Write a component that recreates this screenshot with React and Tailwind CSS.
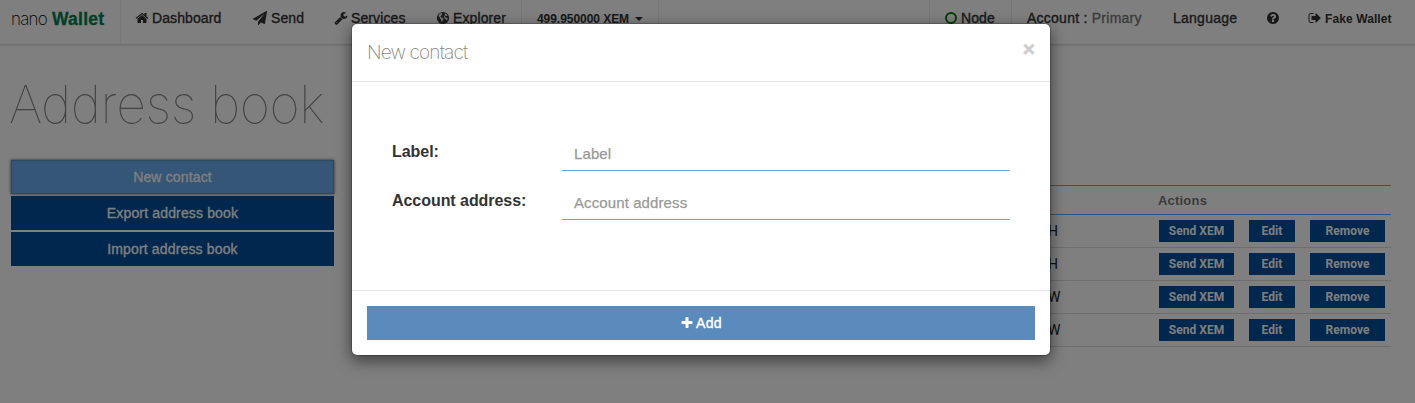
const ICONS = {
  home: "M1472 992v480q0 26-19 45t-45 19h-384v-384h-256v384h-384q-26 0-45-19t-19-45v-480q0-1 .5-3t.5-3l575-474 575 474q1 2 1 6zm223-69l-62 74q-8 9-21 11h-3q-13 0-21-7l-692-577-692 577q-12 8-24 7-13-2-21-11l-62-74q-8-10-7-23.5t11-21.5l719-599q32-26 76-26t76 26l244 204v-195q0-14 9-23t23-9h192q14 0 23 9t9 23v408l219 182q10 8 11 21.5t-7 23.5z",
  send: "M1764 11q33 24 27 64l-256 1536q-5 29-32 45-14 8-31 8-11 0-24-5l-453-185-242 295q-18 23-49 23-13 0-22-4-19-7-30.5-23.5t-11.5-36.5v-349l864-1059-1069 925-395-162q-37-14-40-55-2-40 32-59l1664-960q15-9 32-9 20 0 36 11z",
  wrench: "M448 1472q0-26-19-45t-45-19-45 19-19 45 19 45 45 19 45-19 19-45zm644-420l-682 682q-37 37-90 37-52 0-91-37l-106-108q-38-36-38-90 0-53 38-91l681-681q39 98 114.5 173.5t173.5 114.5zm634-435q0 39-23 106-47 134-164.5 217.5t-258.5 83.5q-185 0-316.5-131.5t-131.5-316.5 131.5-316.5 316.5-131.5q58 0 121.5 16.5t107.5 46.5q16 11 16 28t-16 28l-293 169v224l193 107q5-3 79-48.5t135.5-81 70.5-35.5q15 0 23.5 10t8.5 25z",
  help: "M1024 1376v-192q0-14-9-23t-23-9h-192q-14 0-23 9t-9 23v192q0 14 9 23t23 9h192q14 0 23-9t9-23zm256-672q0-88-55.5-163t-138.5-116-170-41q-243 0-371 213-15 24 8 42l132 100q7 6 19 6 16 0 25-12 53-68 86-92 34-24 86-24 48 0 85.5 26t37.5 59q0 38-20 61t-68 45q-63 28-115.5 86.5t-52.5 125.5v36q0 14 9 23t23 9h192q14 0 23-9t9-23q0-19 21.5-49.5t54.5-49.5q32-18 49-28.5t46-35 44.5-48 28-60.5 12.5-81zm384 192q0 209-103 385.5t-279.5 279.5-385.5 103-385.5-103-279.5-279.5-103-385.5 103-385.5 279.5-279.5 385.5-103 385.5 103 279.5 279.5 103 385.5z",
  signOut: "M704 1440q0 4 1 20t.5 26.5-3 23.5-10 19.5-20.5 6.5h-320q-119 0-203.5-84.5t-84.5-203.5v-704q0-119 84.5-203.5t203.5-84.5h320q13 0 22.5 9.5t9.5 22.5q0 4 1 20t.5 26.5-3 23.5-10 19.5-20.5 6.5h-320q-66 0-113 47t-47 113v704q0 66 47 113t113 47h312l11.5 1 11.5 3 8 5.5 7 9 2 13.5zm928-544q0 26-19 45l-544 544q-19 19-45 19t-45-19-19-45v-288h-448q-26 0-45-19t-19-45v-384q0-26 19-45t45-19h448v-288q0-26 19-45t45-19 45 19l544 544q19 19 19 45z",
  plus: "M1600 736v192q0 40-28 68t-68 28h-416v416q0 40-28 68t-68 28h-192q-40 0-68-28t-28-68v-416h-416q-40 0-68-28t-28-68v-192q0-40 28-68t68-28h416v-416q0-40 28-68t68-28h192q40 0 68 28t28 68v416h416q40 0 68 28t28 68z",
};

function Icon({ name, className = "mb-0.5" }) {
  return (
    <svg viewBox="0 0 1792 1792" fill="currentColor" className={`block size-3.5 shrink-0 ${className}`}>
      <path d={ICONS[name]} />
    </svg>
  );
}

function Globe() {
  return (
    <svg viewBox="0 0 14 14" className="mb-0.5 block size-3.5 shrink-0">
      <circle cx="7" cy="7" r="6.1" fill="currentColor" />
      <path fill="#fff" d="M2.7 4.2 3.6 2.8 5 2l1.2.3-.5.9.9.6-1.4.7-.8 1.1.8.8 1.5.3.9.9-.6 1.5-.9 1.8-.8-.4-.2-2-1.1-1.1-.3-1.2-1.3-1.2zM8.6 2.2l1.9.9 1.1 1.6-.8.4-1.2-.4-.7.9.6 1 1.5.2.8.6-.6 1.5-.8.3-.9-1.3-1.3-.9-.2-1.5.9-1.4z" opacity=".9" />
    </svg>
  );
}

const ROWS = ["H", "H", "W", "W"];

function ActionButton({ className, children }) {
  return (
    <button className={`h-[22px] bg-[#004e9a] pt-px text-center font-[Roboto,sans-serif] text-xs leading-[21px] font-bold tracking-[0.05px] text-white ${className}`}>
      {children}
    </button>
  );
}

function Navbar() {
  return (
    <nav className="flex h-[45px] items-start border-b border-[#dedede] text-sm leading-[37px] tracking-[0.1px] text-[#333] shadow-[0_1px_1px_rgba(0,0,0,0.08)] [-webkit-text-stroke:0.35px]">
      <div className="flex h-[43px] w-[121px] items-start border-r border-[#eee] pl-[11px] [-webkit-text-stroke:0]">
        <span className="w-[41px] pt-px font-[Inter,sans-serif] text-[17px] leading-[37px] font-extralight tracking-[-0.8px] text-black">nano</span>
        <span className="pt-px text-[17.5px] leading-[37px] font-bold tracking-[0.25px] text-[#008050] [-webkit-text-stroke:0.3px]">Wallet</span>
      </div>
      <div className="flex h-[43px] w-[401px] items-start border-r border-[#eee] pl-[14px]">
        <div className="flex w-[118px] items-center gap-[3px]"><Icon name="home" /><span>Dashboard</span></div>
        <div className="flex w-[81px] items-center gap-1"><Icon name="send" /><span>Send</span></div>
        <div className="flex w-[102px] items-center gap-[3px]"><Icon name="wrench" /><span>Services</span></div>
        <div className="flex items-center gap-[3px]"><Globe /><span>Explorer</span></div>
      </div>
      <div className="flex h-[43px] w-[137px] items-start border-r border-[#eee] pl-[15px] text-xs leading-[38px] font-bold tracking-[-0.05px] [-webkit-text-stroke:0]">
        <span className="w-[98px]">499.950000 XEM</span>
        <span className="mt-[17px] border-x-4 border-t-4 border-x-transparent border-t-[#333]" />
      </div>
      <div className="ml-auto flex h-[43px] w-[83px] items-start gap-1 border-x border-[#eee] pl-[15px]">
        <span className="mt-3 size-3 rounded-full border-2 border-[#008000]" />
        <span>Node</span>
      </div>
      <div className="w-[161px] pl-[15px] tracking-[0.25px]">Account : <span className="text-[#777]">Primary</span></div>
      <div className="w-[93px] tracking-[0.25px]">Language</div>
      <div className="flex h-[37px] w-[42px] items-center"><Icon name="help" /></div>
      <div className="flex w-[107px] items-center gap-[3px] text-xs leading-[38px] font-bold [-webkit-text-stroke:0]"><Icon name="signOut" /><span>Fake Wallet</span></div>
    </nav>
  );
}

function ContactModal() {
  return (
    <div className="absolute top-[23px] left-[351px] flex h-[333px] w-[700px] flex-col rounded-md border border-black/20 bg-white bg-clip-padding shadow-[0_5px_15px_rgba(0,0,0,0.5)]">
      <div className="flex h-[58px] items-start justify-between border-b border-[#e5e5e5] px-[15px]">
        <h4 className="pt-[15px] font-[Inter,sans-serif] text-[19px] leading-7 font-extralight tracking-[-0.85px] text-[#888]">New contact</h4>
        <button className="pt-[14px] text-[21px] leading-[21px] font-bold text-[#ccc] [-webkit-text-stroke:0.5px]">×</button>
      </div>
      <div className="flex grow flex-col gap-[15px] px-10 pt-[55px]">
        {["Label", "Account address"].map((label) => (
          <div key={label} className="flex h-[34px] items-stretch">
            <label className="w-[170px] text-base leading-[30px] font-bold tracking-[-0.05px] text-[#333]">{label}:</label>
            <div className="grow border-b border-[#66a3e0] px-3 text-[15px] leading-[34px] tracking-[0.1px] text-[#999] [-webkit-text-stroke:0.25px]">{label}</div>
          </div>
        ))}
      </div>
      <div className="h-[65px] border-t border-[#e5e5e5] p-[15px]">
        <button className="flex h-[34px] w-full items-center justify-center gap-[2px] bg-[#5b8bbd] text-sm tracking-[0.3px] text-white [-webkit-text-stroke:0.4px]">
          <Icon name="plus" className="mb-px" />
          <span>Add</span>
        </button>
      </div>
    </div>
  );
}

export default function App() {
  return (
    <div className="relative h-[403px] w-[1415px] overflow-hidden bg-white font-['Liberation_Sans',Arial,sans-serif]">
      <Navbar />
      <main className="flex justify-between pr-6 pl-[11px]">
        <section className="w-[323px]">
          <h1 className="-ml-[2px] h-[115px] pt-[30px] font-[Inter,sans-serif] text-[52px] leading-[60px] font-thin tracking-[-0.45px] whitespace-nowrap text-[#888]">Address book</h1>
          <div className="flex flex-col gap-[2px] text-sm tracking-[0.15px] text-white [-webkit-text-stroke:0.3px]">
            <button className="h-[34px] bg-[#6aaced] shadow-[0_0_3px_rgba(0,0,0,0.7),inset_0_0_2px_rgba(0,0,0,0.5)]">New contact</button>
            <button className="h-[34px] bg-[#004e9a]">Export address book</button>
            <button className="h-[34px] bg-[#004e9a]">Import address book</button>
          </div>
        </section>
        <section className="mt-[140px] w-[1032px]">
          <div className="flex h-[30px] items-center border-y border-[#66a9ee] pt-px pl-[799px] text-[13px] font-bold tracking-[0.2px] text-[#777]">Actions</div>
          {ROWS.map((end, i) => (
            <div key={i} className="flex h-[33px] items-center border-b border-[#ddd] pl-[689px]">
              <span className="w-[111px] font-[Roboto,sans-serif] text-sm text-[#222]">{end}</span>
              <div className="flex gap-[15px]">
                <ActionButton className="w-[75px]">Send XEM</ActionButton>
                <ActionButton className="w-[46px]">Edit</ActionButton>
                <ActionButton className="w-[75px]">Remove</ActionButton>
              </div>
            </div>
          ))}
        </section>
      </main>
      <div className="absolute inset-0 bg-black/50" />
      <ContactModal />
    </div>
  );
}
